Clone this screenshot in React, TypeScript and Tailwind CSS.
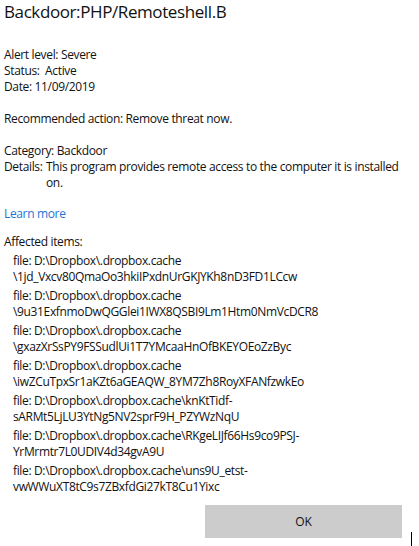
import React from 'react';

const items: [string, string][] = [
  ['file: D:\\Dropbox\\.dropbox.cache', '\\1jd_Vxcv80QmaOo3hkiIPxdnUrGKJYKh8nD3FD1LCcw'],
  ['file: D:\\Dropbox\\.dropbox.cache', '\\9u31ExfnmoDwQGGlei1IWX8QSBI9Lm1Htm0NmVcDCR8'],
  ['file: D:\\Dropbox\\.dropbox.cache', '\\gxazXrSsPY9FSSudlUi1T7YMcaaHnOfBKEYOEoZzByc'],
  ['file: D:\\Dropbox\\.dropbox.cache', '\\iwZCuTpxSr1aKZt6aGEAQW_8YM7Zh8RoyXFANfzwkEo'],
  ['file: D:\\Dropbox\\.dropbox.cache\\knKtTidf-', 'sARMt5LjLU3YtNg5NV2sprF9H_PZYWzNqU'],
  ['file: D:\\Dropbox\\.dropbox.cache\\RKgeLIJf66Hs9co9PSJ-', 'YrMrmtr7L0UDIV4d34gvA9U'],
  ['file: D:\\Dropbox\\.dropbox.cache\\uns9U_etst-', 'vwWWuXT8tC9s7ZBxfdGi27kT8Cu1Yixc'],
];

export default function App() {
  return (
    <div
      className="relative w-[419px] h-[546px] bg-white text-[#111] overflow-hidden"
      style={{ fontFamily: '"Segoe UI", "Open Sans", "Noto Sans", sans-serif' }}
    >
      <div className="flex flex-col px-1 text-[12px] leading-[16px] tracking-[-0.35px]">
        <h1 className="text-[17px] leading-[22px] font-normal tracking-[-0.4px] pt-px">
          Backdoor:PHP/Remoteshell.B
        </h1>

        <div className="mt-[24px] flex flex-col">
          <div>Alert level: Severe</div>
          <div>Status:&nbsp; Active</div>
          <div>Date: 11/09/2019</div>
        </div>

        <div className="mt-[16px]">Recommended action: Remove threat now.</div>

        <div className="mt-[16px] flex flex-col">
          <div>Category: Backdoor</div>
          <div className="flex">
            <span className="w-[42px] shrink-0">Details:</span>
            <span className="w-[358px]">This program provides remote access to the computer it is installed on.</span>
          </div>
        </div>

        <a className="mt-[15px] text-[#1e76d3] w-fit">Learn more</a>

        <div className="mt-[12px]">Affected items:</div>
        <div className="flex flex-col gap-[3px] pl-[9px] mt-[3px]">
          {items.map(([a, b], i) => (
            <div key={i} className="flex flex-col">
              <span>{a}</span>
              <span>{b}</span>
            </div>
          ))}
        </div>

        <div className="flex justify-end pr-[13px] mt-[10px]">
          <button className="w-[197px] h-[33px] bg-[#cccccc] text-[12px] tracking-normal">OK</button>
        </div>
      </div>
      <div className="absolute left-[411px] top-[532px] w-px h-[14px] bg-black" />
    </div>
  );
}
